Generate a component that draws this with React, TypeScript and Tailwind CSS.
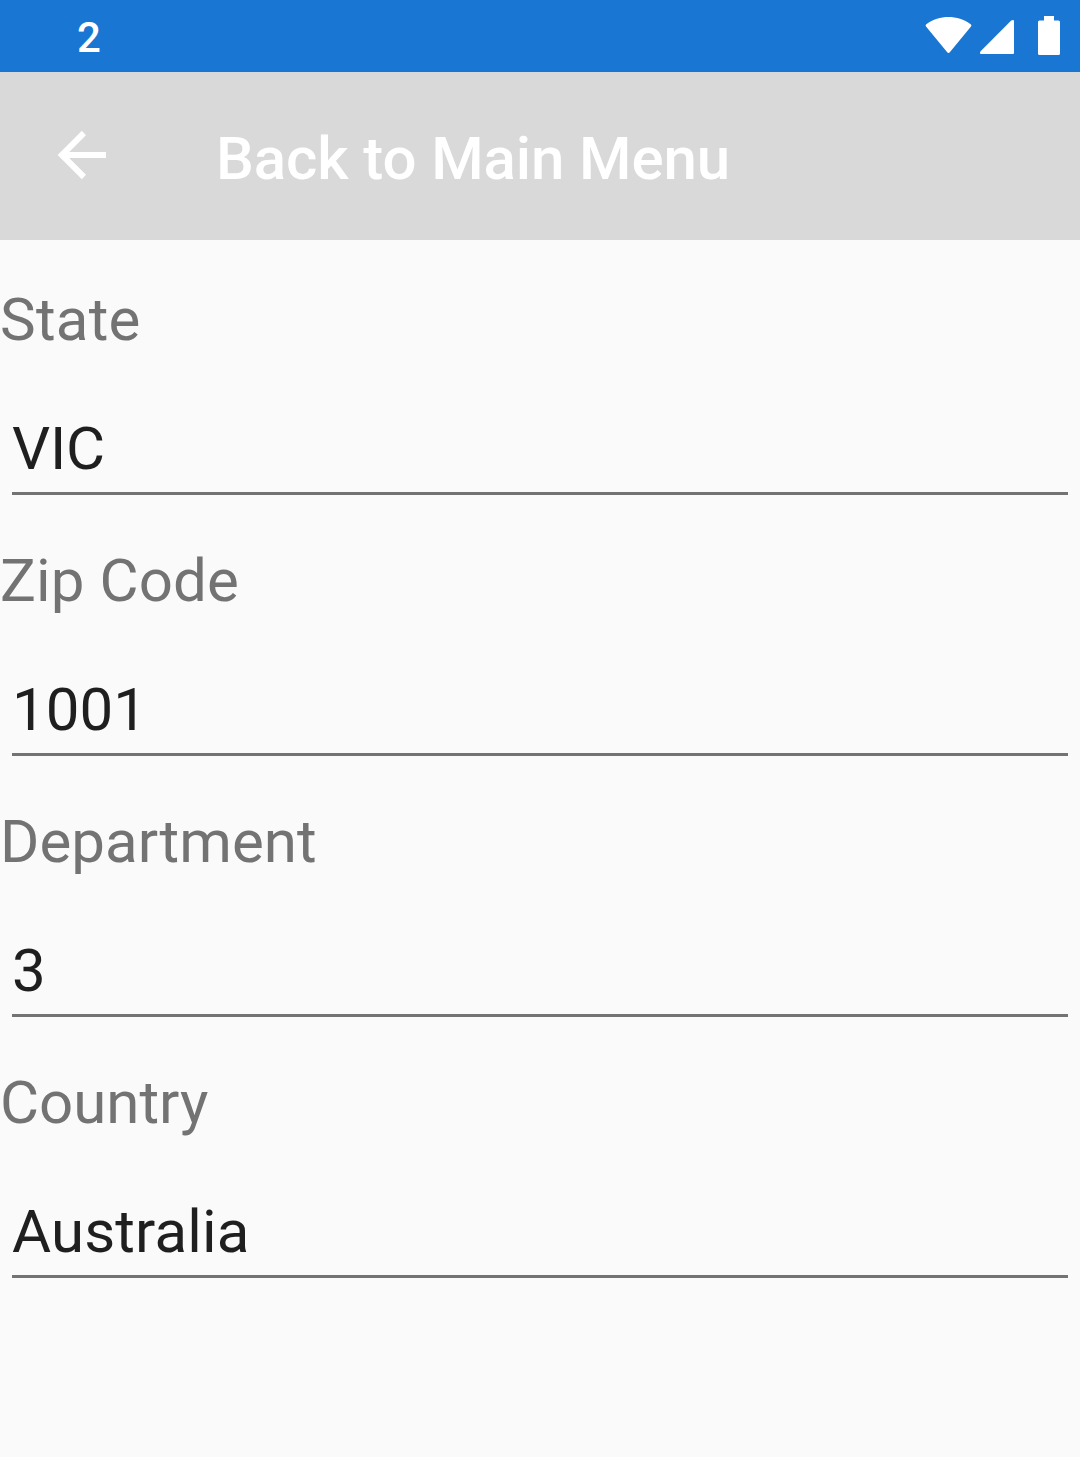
const fields = [
  { label: "State", value: "VIC", labelTracking: "tracking-[0.25px]", valueTracking: "tracking-[-0.25px]" },
  { label: "Zip Code", value: "1001", labelTracking: "tracking-[0.12px]", valueTracking: "tracking-normal" },
  { label: "Department", value: "3", labelTracking: "tracking-[0.05px]", valueTracking: "tracking-normal" },
  { label: "Country", value: "Australia", labelTracking: "tracking-normal", valueTracking: "tracking-[0.15px]" },
];

function StatusBar() {
  return (
    <div className="flex h-[72px] items-start justify-between bg-[#1976d2] text-white">
      <span className="pt-[13px] pl-[77px] text-[42px] leading-[49px] font-medium">2</span>
      <svg width="160" height="72" viewBox="920 0 160 72" fill="currentColor">
        <path d="M926.3 24.3C939.5 14.6 957.5 14.6 970.7 24.3Q972 25.3 971 26.6L950 52Q948.5 54 947 52L926 26.6Q925 25.3 926.3 24.3Z" />
        <path d="M1011.2 20.6Q1012 20 1013 20Q1014 20 1014 21V53Q1014 54 1013 54H981Q980 54 980 53Q980 51.8 980.6 51.2Z" />
        <path d="M1044 16H1054V20.5H1058.5Q1060 20.5 1060 22V53.5Q1060 55 1058.5 55H1039.5Q1038 55 1038 53.5V22Q1038 20.5 1039.5 20.5H1044Z" />
      </svg>
    </div>
  );
}

function AppBar() {
  return (
    <header className="flex h-[168px] items-center bg-[#d9d9d9] text-white">
      <svg className="ml-[46px] -mt-[2px]" width="72" height="72" viewBox="0 0 24 24" fill="currentColor">
        <path d="M20 11H7.75l5.58-5.58L11.95 3.9 3.87 12l8.08 8.1 1.38-1.52L7.75 13H20z" />
      </svg>
      <h1 className="ml-[98px] pt-[5px] text-[60px] leading-[70px] font-medium tracking-[-0.1px]">
        Back to Main Menu
      </h1>
    </header>
  );
}

export default function App() {
  return (
    <div className="h-[1457px] w-[1080px] overflow-hidden bg-[#fafafa] font-['Roboto',sans-serif]">
      <StatusBar />
      <AppBar />
      <main className="pt-[45px]">
        {fields.map((f) => (
          <div key={f.label} className="h-[261px]">
            <div className={`text-[60px] leading-[70px] text-[#737373] ${f.labelTracking}`}>{f.label}</div>
            <div
              className={`mx-3 h-[140px] border-b-3 border-[#737373] pt-[59px] text-[60px] leading-[70px] text-[#1f1f1f] ${f.valueTracking}`}
            >
              {f.value}
            </div>
          </div>
        ))}
      </main>
    </div>
  );
}
